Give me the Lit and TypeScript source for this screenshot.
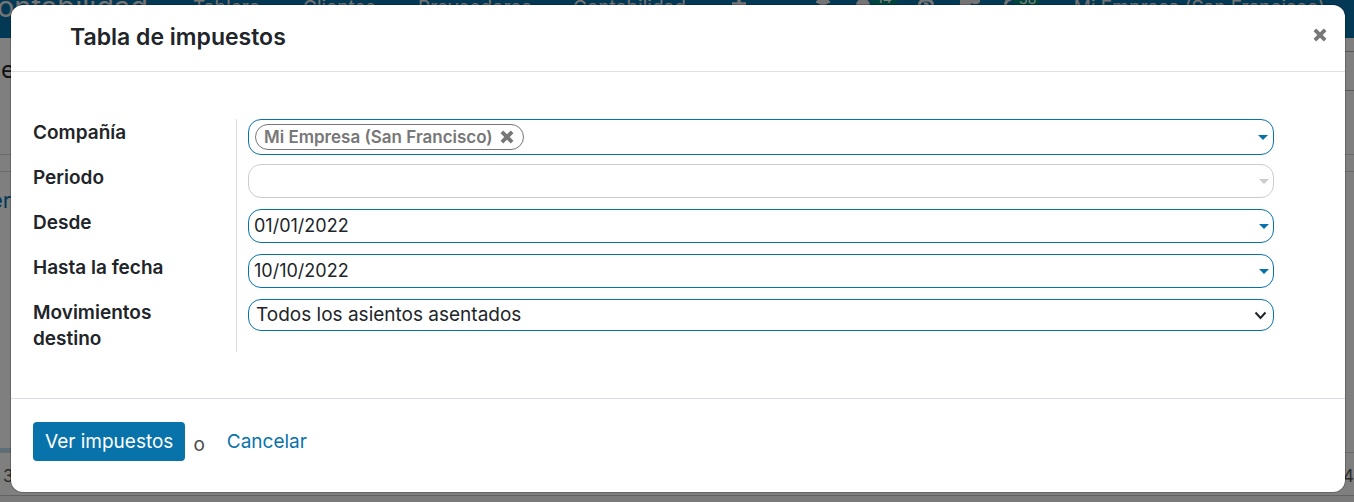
import { LitElement, html, css } from "lit";
import { customElement, state } from "lit/decorators.js";

const cross = html`<svg class="cross" viewBox="0 0 12 12" aria-hidden="true">
  <path d="M1.6 1.6L10.4 10.4M10.4 1.6L1.6 10.4" stroke="currentColor" stroke-width="3.2" fill="none" />
</svg>`;

const caret = html`<svg class="caret" viewBox="0 0 10 5" aria-hidden="true">
  <path d="M0 0H10L5 5Z" fill="currentColor" />
</svg>`;

@customElement("accounting-backdrop")
class AccountingBackdrop extends LitElement {
  static styles = css`
    :host { display: block; height: 100%; overflow: hidden; background: #fff; }
    nav { display: flex; height: 38px; background: #0873ab; color: #e8e8e8; white-space: nowrap; }
    .brand { display: flex; justify-content: flex-end; width: 193px; flex: none; font-size: 29px; line-height: 24px; margin-top: -5px; padding-right: 45px; box-sizing: border-box; }
    .menu { display: grid; grid-template-columns: 110px 115px 155px 157px 80px; flex: none; }
    .menu a { color: inherit; text-decoration: none; font-size: 19px; line-height: 20px; margin-top: -2px; }
    .menu svg { width: 18px; height: 18px; margin-top: -5px; }
    .tools { display: flex; flex: 1; }
    .tools svg { width: 240px; height: 20px; margin-top: -10px; flex: none; }
    .badge { fill: #008a78; }
    .count { font-size: 14px; fill: #fff; }
    .company { font-size: 19px; line-height: 20px; margin-top: -2px; margin-left: auto; padding-right: 29px; }
    .panel { display: flex; justify-content: space-between; height: 116px; border-bottom: 1px solid #d6d6d6; font-size: 24px; line-height: 26px; }
    .crumb { padding: 19px 0 0 1px; color: #212529; }
    .search { width: 30%; height: 38px; margin-top: 13px; border: solid #b4b4b4; border-width: 1px 0; }
    .board { height: 280px; margin-top: 16px; border: solid #d6d6d6; border-width: 1px 0; color: #0873ab; font-size: 22px; line-height: 26px; display: flex; flex-direction: column; justify-content: space-between; }
    .board span { padding-top: 15px; margin-left: -10px; }
    .bar { width: 40%; height: 4px; background: #b9dcee; }
    .totals { display: flex; justify-content: space-between; height: 42px; line-height: 46px; border-bottom: 1px solid #c4c4c4; color: #555; font-size: 17px; padding-left: 3px; }
    .rest { background: #f4f4f4; height: 20px; }
  `;
  render() {
    return html`
      <nav>
        <span class="brand">Contabilidad</span>
        <div class="menu">
          <a href="#tablero">Tablero</a><a href="#clientes">Clientes</a><a href="#proveedores">Proveedores</a><a href="#contabilidad">Contabilidad</a>
          <svg viewBox="0 0 18 18" aria-hidden="true"><path d="M2 9H16M9 2V16" stroke="currentColor" stroke-width="3.4" /></svg>
        </div>
        <div class="tools">
          <svg viewBox="0 0 240 20" aria-hidden="true">
            <g fill="none" stroke="currentColor" stroke-width="2">
              <path d="M8 8V11Q8 14 13 14Q18 14 18 11V8M6 12H20M9 10H17" />
              <path d="M109 16Q109 10 116 10Q123 10 123 16M114 14Q118 13 118 17" stroke-width="3" />
              <path d="M201 9Q194 11 196 17" stroke-width="3" />
            </g>
            <path d="M46 16Q46 9 53 9Q60 9 60 16ZM150 8H170V12Q167 16 161 13V16H150Z" fill="currentColor" />
            <rect class="badge" x="60" y="-2" width="28" height="17" rx="7" />
            <rect class="badge" x="202" y="-2" width="29" height="17" rx="7" />
            <text class="count" x="67" y="13">14</text>
            <text class="count" x="209" y="14">38</text>
          </svg>
        </div>
        <span class="company">Mi Empresa (San Francisco)</span>
      </nav>
      <div class="panel"><span class="crumb">e</span><div class="search"></div></div>
      <div class="board"><span>er</span><div class="bar"></div></div>
      <div class="totals"><span>3</span><span>4</span></div>
      <div class="rest"></div>
    `;
  }
}

@customElement("app-root")
export class AppRoot extends LitElement {
  static styles = css`
    :host { display: block; position: relative; height: 100vh; overflow: hidden; font-family: Inter, "Open Sans", sans-serif; font-size: 19px; line-height: 26px; color: #212529; }
    .overlay { position: absolute; inset: 0; box-sizing: border-box; padding: 5px 9px 10px 11px; background: rgba(0, 0, 0, 0.5); }
    .dialog { display: flex; flex-direction: column; height: 100%; background: #fff; border-radius: 12px; box-shadow: 0 0 0 1px rgba(0, 0, 0, 0.2); }
    header { display: flex; justify-content: space-between; align-items: flex-start; height: 49px; padding: 17px 18px 0 59px; border-bottom: 1px solid #dee2e6; }
    h1 { margin: 0; font-size: 23px; font-weight: 600; line-height: 30px; }
    button { font: inherit; border: 0; cursor: pointer; }
    .close, .remove { display: flex; padding: 0; background: none; color: #777; }
    .close { margin-top: 6px; }
    .cross { width: 14px; height: 14px; }
    .form { flex: 1; padding: 47px 71px 46px 22px; }
    .row { display: grid; grid-template-columns: 204px 1fr; column-gap: 11px; min-height: 45px; align-items: start; }
    .row > label { align-self: stretch; box-sizing: border-box; padding: 1px 60px 0 0; border-right: 1px solid #ddd; font-weight: 600; }
    .field { display: flex; align-items: center; box-sizing: border-box; height: 34px; padding: 0 4px 0 5px; border: 1px solid #0873ab; border-radius: 13px; color: #0873ab; }
    .field.tags { height: 36px; padding: 0 5px 0 6px; }
    .field.off { border-color: #ccc; color: #ccc; }
    .field input { flex: 1; min-width: 0; padding: 0; border: 0; outline: 0; background: none; font: inherit; font-size: 18px; color: #212529; }
    .caret { width: 10px; height: 5px; }
    .tag { display: flex; align-items: center; gap: 7px; box-sizing: border-box; height: 26px; padding: 0 9px 0 8px; border: 1px solid #777; border-radius: 13px; color: #777; font-size: 17px; font-weight: 600; }
    .choice { position: relative; }
    .choice select { display: block; width: 100%; height: 32px; padding: 0 30px 0 7px; border: 1px solid #0873ab; border-radius: 13px; appearance: none; background: #fff; color: #212529; font: inherit; }
    .chevron { position: absolute; right: 7px; top: 12px; width: 13px; height: 9px; pointer-events: none; }
    footer { display: flex; align-items: flex-start; height: 70px; padding: 23px 22px 0; border-top: 1px solid #dcdce6; }
    .primary { height: 39px; padding: 0 12px; border-radius: 4px; background: #0873ab; color: #fff; }
    .or { margin: 10px 22px 0 8px; color: #4c4c4c; }
    .link { height: 39px; padding: 0; background: none; color: #0873ab; }
  `;
  @state() private tagged = true;
  render() {
    return html`
      <accounting-backdrop aria-hidden="true"></accounting-backdrop>
      <div class="overlay">
        <div class="dialog" role="dialog" aria-labelledby="title">
          <header><h1 id="title">Tabla de impuestos</h1><button class="close" aria-label="Cerrar">${cross}</button></header>
          <div class="form">
            <div class="row"><label for="company">Compañía</label>
              <div class="field tags">
                ${this.tagged ? html`<span class="tag">Mi Empresa (San Francisco)<button class="remove" aria-label="Quitar" @click=${() => (this.tagged = false)}>${cross}</button></span>` : ""}
                <input id="company" />${caret}
              </div></div>
            <div class="row"><label for="period">Periodo</label><div class="field off"><input id="period" disabled />${caret}</div></div>
            <div class="row"><label for="from">Desde</label><div class="field"><input id="from" value="01/01/2022" />${caret}</div></div>
            <div class="row"><label for="to">Hasta la fecha</label><div class="field"><input id="to" value="10/10/2022" />${caret}</div></div>
            <div class="row"><label for="moves">Movimientos destino</label>
              <div class="choice"><select id="moves"><option>Todos los asientos asentados</option><option>Todos los asientos</option></select>
                <svg class="chevron" viewBox="0 0 13 9" aria-hidden="true"><path d="M1.5 1.5L6.5 7L11.5 1.5" fill="none" stroke="#212529" stroke-width="2" /></svg>
              </div></div>
          </div>
          <footer><button class="primary">Ver impuestos</button><span class="or">o</span><button class="link">Cancelar</button></footer>
        </div>
      </div>
    `;
  }
}
